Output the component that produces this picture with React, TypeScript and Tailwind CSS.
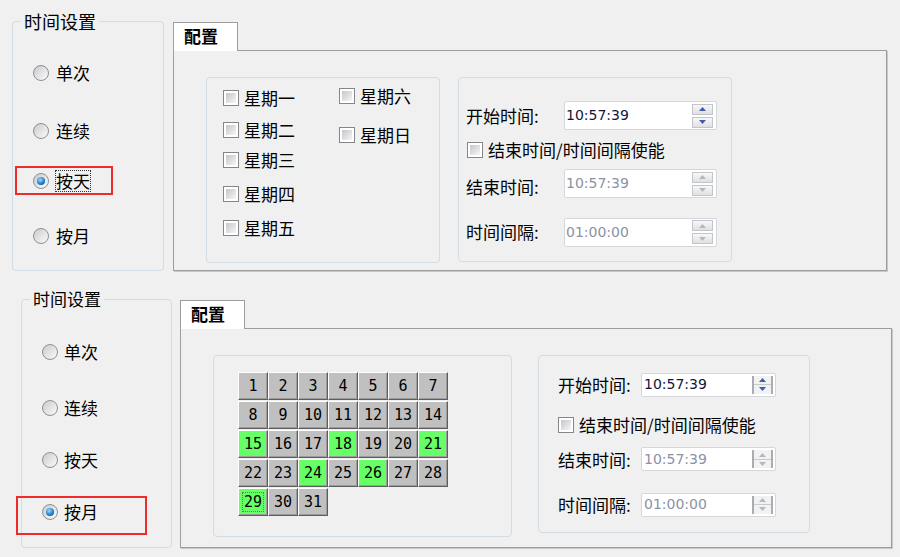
import React from "react";

const FONT = "font-['Noto_Sans_CJK_SC','Noto_Sans',sans-serif]";

function Radio({ checked }: { checked?: boolean }) {
  return (
    <span className="w-4 h-4 rounded-full border border-[#8e8f8f] bg-linear-to-br from-[#c9cbce] to-[#fbfbfb] flex items-center justify-center shrink-0">
      {checked && (
        <span className="w-[8px] h-[8px] rounded-full bg-[radial-gradient(circle_at_40%_35%,#9ddcff,#1978c8_60%,#0b3c78)]" />
      )}
    </span>
  );
}

function Check() {
  return (
    <span className="w-4 h-4 border border-[#858686] bg-white p-[2px] flex shrink-0">
      <span className="flex-1 bg-linear-to-br from-[#c3c6cb] to-[#f6f6f6]" />
    </span>
  );
}

function Arrow({ up, color }: { up?: boolean; color: string }) {
  return (
    <svg width="7" height="4" viewBox="0 0 7 4">
      <path d={up ? "M0 4 L3.5 0 L7 4Z" : "M0 0 L3.5 4 L7 0Z"} fill={color} />
    </svg>
  );
}

// spin box with two separate buttons (top dialog)
function SpinA({ value, disabled }: { value: string; disabled?: boolean }) {
  const c = disabled ? "#b5b8bd" : "#3b5fae";
  return (
    <div className="w-[153px] h-[29px] bg-white border border-[#d4d7db] rounded-[2px] flex items-center pl-[1px] pr-[3px]">
      <span
        className={`flex-1 font-['DejaVu_Sans',sans-serif] text-[14px] ${disabled ? "text-[#8b92a6]" : "text-[#14143c]"}`}
      >
        {value}
      </span>
      <div className="flex flex-col gap-[2px]">
        <span className="w-[21px] h-[11px] border border-[#c2c6cc] bg-linear-to-b from-[#f8f8f8] to-[#e0e0e0] flex items-center justify-center">
          <Arrow up color={c} />
        </span>
        <span className="w-[21px] h-[11px] border border-[#c2c6cc] bg-linear-to-b from-[#f8f8f8] to-[#e0e0e0] flex items-center justify-center">
          <Arrow color={c} />
        </span>
      </div>
    </div>
  );
}

// spin box with a single bracketed arrow pair (bottom dialog)
function SpinB({ value, disabled }: { value: string; disabled?: boolean }) {
  const c = disabled ? "#b5b8bd" : "#3b5fae";
  return (
    <div className="w-[135px] h-[24px] bg-white border border-[#d4d7db] rounded-[2px] flex items-center pl-[2px] pr-[2px]">
      <span
        className={`flex-1 font-['DejaVu_Sans',sans-serif] text-[14px] ${disabled ? "text-[#8b92a6]" : "text-[#14143c]"}`}
      >
        {value}
      </span>
      <div className="w-[21px] h-[18px] border-x-2 border-[#a9adb3] bg-[#f2f2f2] flex flex-col items-center justify-center gap-[2px]">
        <Arrow up color={c} />
        <span className="w-full h-px bg-[#c6c9cd]" />
        <Arrow color={c} />
      </div>
    </div>
  );
}

function TabHeader({ title }: { title: string }) {
  return (
    <div className="w-[65px] h-[29px] bg-white border border-b-0 border-[#9d9d9d] -mb-px relative z-10 pl-[10px] pt-[1px] text-[17px] leading-[24px] font-bold">
      {title}
    </div>
  );
}

const weekCol1 = [
  { t: "星期一", m: "mt-[8px]" },
  { t: "星期二", m: "mt-[8px]" },
  { t: "星期三", m: "mt-[6px]" },
  { t: "星期四", m: "mt-[10px]" },
  { t: "星期五", m: "mt-[10px]" },
];
const weekCol2 = [
  { t: "星期六", m: "mt-[6px]" },
  { t: "星期日", m: "mt-[15px]" },
];

const greenDays = [15, 18, 21, 24, 26, 29];

function DayCell({ d }: { d: number }) {
  const green = greenDays.includes(d);
  return (
    <div
      className={`w-[30px] h-[28px] flex items-center justify-center border border-t-white border-l-white border-b-[#5d5d5d] border-r-[#5d5d5d] shadow-[inset_-1px_-1px_#9c9c9c] font-['DejaVu_Sans_Mono',monospace] text-[15px] text-black ${
        green ? "bg-[#66ff66]" : "bg-[#c0c0c0]"
      }`}
    >
      {d === 29 ? (
        <span className="border border-dotted border-[#b04cb0] px-[1px] leading-[18px]">{d}</span>
      ) : (
        d
      )}
    </div>
  );
}

export default function App() {
  const topRadios = [
    { t: "单次", m: "mt-[28px]" },
    { t: "连续", m: "mt-[34px]" },
    { t: "按天", m: "mt-[26px]", on: true },
    { t: "按月", m: "mt-[31px]" },
  ];
  const bottomRadios = [
    { t: "单次", m: "mt-[29px]" },
    { t: "连续", m: "mt-[32px]" },
    { t: "按天", m: "mt-[28px]" },
    { t: "按月", m: "mt-[28px]", on: true },
  ];

  return (
    <div className={`w-[900px] h-[557px] bg-[#f0f0f0] relative overflow-hidden text-black ${FONT}`}>
      {/* top dialog: by day */}
      <div className="flex items-start pl-[12px]">
        <fieldset className="mt-[9px] w-[152px] h-[262px] border border-[#d3dce3] rounded-[4px]">
          <legend className="ml-[8px] px-[3px] text-[18px] leading-[24px]">时间设置</legend>
          <div className="pl-[20px]">
            {topRadios.map((r) => (
              <div key={r.t} className={`flex items-center gap-[6px] h-[24px] ${r.m}`}>
                <Radio checked={r.on} />
                <span
                  className={`text-[17px] leading-[20px] ${r.on ? "border border-dotted border-[#333]" : "border border-transparent"}`}
                >
                  {r.t}
                </span>
              </div>
            ))}
          </div>
        </fieldset>

        <div className="ml-[9px] mt-[22px] flex flex-col">
          <TabHeader title="配置" />
          <div className="w-[714px] h-[221px] border border-[#9d9d9d] shadow-[1px_1px_#c8c8c8] pl-[32px] pt-[26px] flex gap-[18px]">
            <div className="w-[234px] h-[186px] border border-[#d3dce3] rounded-[4px] pl-[16px] flex">
              <div className="w-[116px] flex flex-col">
                {weekCol1.map((w) => (
                  <div key={w.t} className={`flex items-center gap-[5px] h-[24px] ${w.m}`}>
                    <Check />
                    <span className="text-[17px]">{w.t}</span>
                  </div>
                ))}
              </div>
              <div className="flex flex-col">
                {weekCol2.map((w) => (
                  <div key={w.t} className={`flex items-center gap-[5px] h-[24px] ${w.m}`}>
                    <Check />
                    <span className="text-[17px]">{w.t}</span>
                  </div>
                ))}
              </div>
            </div>

            <div className="w-[274px] h-[185px] border border-[#d3dce3] rounded-[4px] pl-[7px] flex flex-col text-[17px]">
              <div className="flex items-center mt-[23px]">
                <span className="w-[98px]">开始时间:</span>
                <SpinA value="10:57:39" />
              </div>
              <div className="flex items-center gap-[5px] h-[20px] mt-[10px] pl-[1px]">
                <Check />
                <span>结束时间/时间间隔使能</span>
              </div>
              <div className="flex items-center mt-[8px]">
                <span className="w-[98px] pt-[6px]">结束时间:</span>
                <SpinA value="10:57:39" disabled />
              </div>
              <div className="flex items-center mt-[18px]">
                <span className="w-[98px]">时间间隔:</span>
                <SpinA value="01:00:00" disabled />
              </div>
            </div>
          </div>
        </div>
      </div>

      {/* bottom dialog: by month */}
      <div className="flex items-start pl-[21px]">
        <fieldset className="mt-[16px] w-[151px] h-[261px] border border-[#d3dce3] rounded-[4px]">
          <legend className="ml-[8px] px-[3px] text-[17px] leading-[24px]">时间设置</legend>
          <div className="pl-[20px]">
            {bottomRadios.map((r) => (
              <div key={r.t} className={`flex items-center gap-[6px] h-[24px] ${r.m}`}>
                <Radio checked={r.on} />
                <span className="text-[17px] leading-[20px]">{r.t}</span>
              </div>
            ))}
          </div>
        </fieldset>

        <div className="ml-[8px] mt-[29px] flex flex-col">
          <TabHeader title="配置" />
          <div className="w-[712px] h-[220px] border border-[#9d9d9d] shadow-[1px_1px_#c8c8c8] pl-[32px] pt-[26px] flex gap-[26px]">
            <div className="w-[299px] h-[182px] border border-[#d3dce3] rounded-[4px] pl-[24px] pt-[16px]">
              <div className="grid grid-cols-[repeat(7,30px)] auto-rows-[28px] gap-y-px">
                {Array.from({ length: 31 }).map((_, i) => (
                  <DayCell key={i} d={i + 1} />
                ))}
              </div>
            </div>

            <div className="w-[272px] h-[178px] border border-[#d3dce3] rounded-[4px] pl-[19px] flex flex-col text-[17px]">
              <div className="flex items-center mt-[16px]">
                <span className="w-[83px]">开始时间:</span>
                <SpinB value="10:57:39" />
              </div>
              <div className="flex items-center gap-[5px] h-[20px] mt-[17px]">
                <Check />
                <span>结束时间/时间间隔使能</span>
              </div>
              <div className="flex items-center mt-[12px]">
                <span className="w-[83px]">结束时间:</span>
                <SpinB value="10:57:39" disabled />
              </div>
              <div className="flex items-center mt-[20px]">
                <span className="w-[83px]">时间间隔:</span>
                <SpinB value="01:00:00" disabled />
              </div>
            </div>
          </div>
        </div>
      </div>

      {/* red highlight boxes */}
      <div className="absolute left-[15px] top-[166px] w-[98px] h-[29px] border-2 border-[#ee2b2b]" />
      <div className="absolute left-[16px] top-[496px] w-[131px] h-[39px] border-2 border-[#ee2b2b]" />
    </div>
  );
}
